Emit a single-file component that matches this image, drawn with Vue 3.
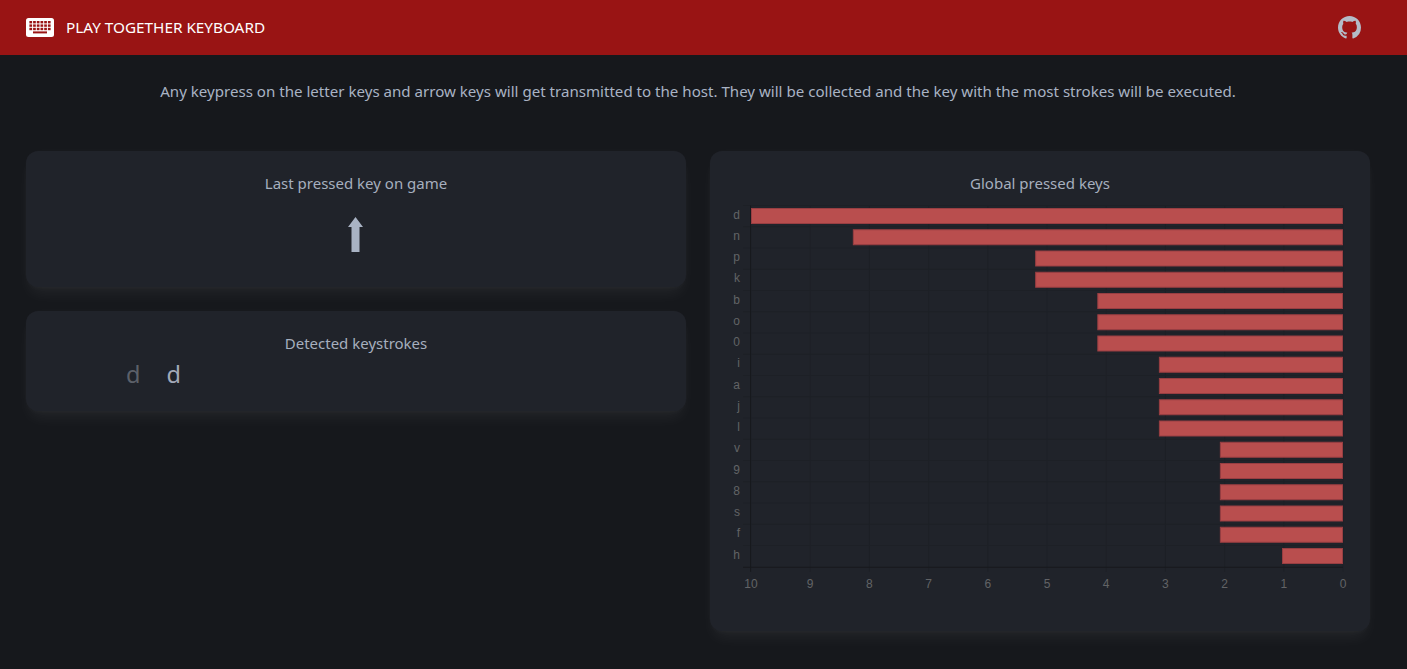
<script setup>
const rows = [
  ['d', 10], ['n', 8.28], ['p', 5.2], ['k', 5.2], ['b', 4.15], ['o', 4.15], ['0', 4.15],
  ['i', 3.11], ['a', 3.11], ['j', 3.11], ['l', 3.11], ['v', 2.08], ['9', 2.08], ['8', 2.08],
  ['s', 2.08], ['f', 2.08], ['h', 1.03]
]
const unit = 59.2
const rowH = 21.25
const plotLeft = 40
const plotTop = 5.5
const plotW = 592
const plotH = rowH * rows.length
const ticks = [10, 9, 8, 7, 6, 5, 4, 3, 2, 1, 0]
const tickX = (t) => plotLeft + plotW - t * unit
</script>

<template>
  <div class="page">
    <header class="topbar">
      <div class="brand">
        <svg class="kbd" viewBox="0 0 28 19" aria-hidden="true">
          <rect width="28" height="19" rx="2.5" fill="#fff" />
          <g fill="#991414">
            <rect v-for="i in 6" :key="'a' + i" :x="3.4 + (i - 1) * 3.7" y="3" width="2.7" height="2.4" />
            <rect v-for="i in 6" :key="'b' + i" :x="3.4 + (i - 1) * 3.7" y="6.4" width="2.7" height="2.4" />
            <rect v-for="i in 6" :key="'c' + i" :x="3.4 + (i - 1) * 3.7" y="9.8" width="2.7" height="2.4" />
            <rect x="7" y="13.4" width="14" height="2" />
          </g>
        </svg>
        <span class="brand-name">PLAY TOGETHER KEYBOARD</span>
      </div>
      <svg class="gh" viewBox="0 0 16 16" aria-hidden="true">
        <path fill="#b4bbc7" d="M8 0C3.58 0 0 3.58 0 8c0 3.54 2.29 6.53 5.47 7.59.4.07.55-.17.55-.38 0-.19-.01-.82-.01-1.49-2.01.37-2.53-.49-2.69-.94-.09-.23-.48-.94-.82-1.13-.28-.15-.68-.52-.01-.53.63-.01 1.08.58 1.23.82.72 1.21 1.87.87 2.33.66.07-.52.28-.87.51-1.07-1.78-.2-3.64-.89-3.64-3.95 0-.87.31-1.59.82-2.15-.08-.2-.36-1.02.08-2.12 0 0 .67-.21 2.2.82.64-.18 1.32-.27 2-.27.68 0 1.36.09 2 .27 1.53-1.04 2.2-.82 2.2-.82.44 1.1.16 1.92.08 2.12.51.56.82 1.27.82 2.15 0 3.07-1.87 3.75-3.65 3.95.29.25.54.73.54 1.48 0 1.07-.01 1.93-.01 2.2 0 .21.15.46.55.38A8.013 8.013 0 0016 8c0-4.42-3.58-8-8-8z" />
      </svg>
    </header>

    <p class="intro">Any keypress on the letter keys and arrow keys will get transmitted to the host. They will be collected and the key with the most strokes will be executed.</p>

    <main class="columns">
      <div class="col">
        <section class="card card-last">
          <h2 class="title">Last pressed key on game</h2>
          <svg class="arrow" viewBox="0 0 15 35" aria-hidden="true">
            <path fill="#a9b3c4" d="M7.5 0 15 10H11.5V35H3.5V10H0Z" />
          </svg>
        </section>
        <section class="card card-strokes">
          <h2 class="title">Detected keystrokes</h2>
          <div class="strokes">
            <span class="stroke dim">d</span>
            <span class="stroke">d</span>
          </div>
        </section>
      </div>
      <div class="col">
        <section class="card card-chart">
          <h2 class="title">Global pressed keys</h2>
          <svg class="chart" width="640" height="410" viewBox="0 0 640 410">
            <g stroke="#1d2026" stroke-width="1">
              <line v-for="t in ticks" :key="'v' + t" :x1="tickX(t)" :x2="tickX(t)" :y1="plotTop" :y2="plotTop + plotH + 5" />
              <line v-for="(r, i) in rows" :key="'h' + i" :x1="plotLeft - 8" :x2="plotLeft + plotW" :y1="plotTop + i * rowH" :y2="plotTop + i * rowH" />
            </g>
            <line :x1="plotLeft - 0.5" :x2="plotLeft - 0.5" :y1="plotTop" :y2="plotTop + plotH + 5" stroke="#17191d" />
            <line :x1="plotLeft - 8" :x2="plotLeft + plotW" :y1="plotTop + plotH + 0.5" :y2="plotTop + plotH + 0.5" stroke="#17191d" />
            <g v-for="(r, i) in rows" :key="r[0]">
              <rect class="bar" :x="plotLeft + plotW - r[1] * unit + 0.5" :y="plotTop + i * rowH + 3" :width="r[1] * unit - 1" height="15" />
              <text class="lbl" :x="plotLeft - 11" :y="plotTop + i * rowH + 13" text-anchor="end">{{ r[0] }}</text>
            </g>
            <text v-for="t in ticks" :key="'t' + t" class="lbl" :x="tickX(t)" y="388" text-anchor="middle">{{ t }}</text>
          </svg>
        </section>
      </div>
    </main>
  </div>
</template>

<style>
html, body { margin: 0; background: #16181c; }
</style>

<style scoped>
.page {
  min-height: 669px;
  background: #16181c;
  font-family: "Noto Sans", "Open Sans", sans-serif;
  color: #a9b3c4;
  overflow: hidden;
}
.topbar {
  height: 55px;
  background: #991414;
  display: flex;
  align-items: center;
  justify-content: space-between;
  padding: 0 46px 0 26px;
}
.brand { display: flex; align-items: center; gap: 12px; }
.kbd { width: 28px; height: 19px; display: block; margin-top: -1px; }
.brand-name { color: #fff; font-size: 15.3px; line-height: 20px; margin-top: -1px; }
.gh { width: 23px; height: 23px; display: block; }
.intro {
  margin: 0;
  padding: 25px 11px 0 0;
  height: 71px;
  line-height: 22px;
  font-size: 15.1px;
  text-align: center;
}
.columns {
  display: grid;
  grid-template-columns: 660px 660px;
  gap: 24px;
  padding-left: 26px;
}
.col { display: flex; flex-direction: column; gap: 24px; }
.card {
  background: #20232a;
  border-radius: 12px;
  box-shadow: 0 10px 15px -3px rgba(255, 255, 255, 0.05), 0 3px 6px -2px rgba(255, 255, 255, 0.035), 0 0 14px rgba(255, 255, 255, 0.02);
  padding-top: 22px;
  box-sizing: border-box;
  display: flex;
  flex-direction: column;
  align-items: center;
}
.card-last { height: 136px; }
.card-strokes { height: 100px; }
.card-chart { height: 480px; }
.title { margin: 0; font-size: 15px; font-weight: 400; line-height: 20px; color: #a6afbe; }
.arrow { width: 15px; height: 35px; margin-top: 24px; display: block; margin-left: -1px; }
.strokes { align-self: flex-start; display: flex; gap: 26px; padding-left: 100px; margin-top: 6px; }
.stroke { font-size: 23.5px; line-height: 30px; color: #a3a9b8; }
.stroke.dim { color: #5c6069; }
.chart { display: block; margin-top: 7px; align-self: flex-start; margin-left: 1px; }
.bar { fill: #b94e4e; stroke: #983e42; stroke-width: 1; }
.lbl { font-family: "Liberation Sans", Arial, sans-serif; font-size: 12px; fill: #626366; }
</style>
